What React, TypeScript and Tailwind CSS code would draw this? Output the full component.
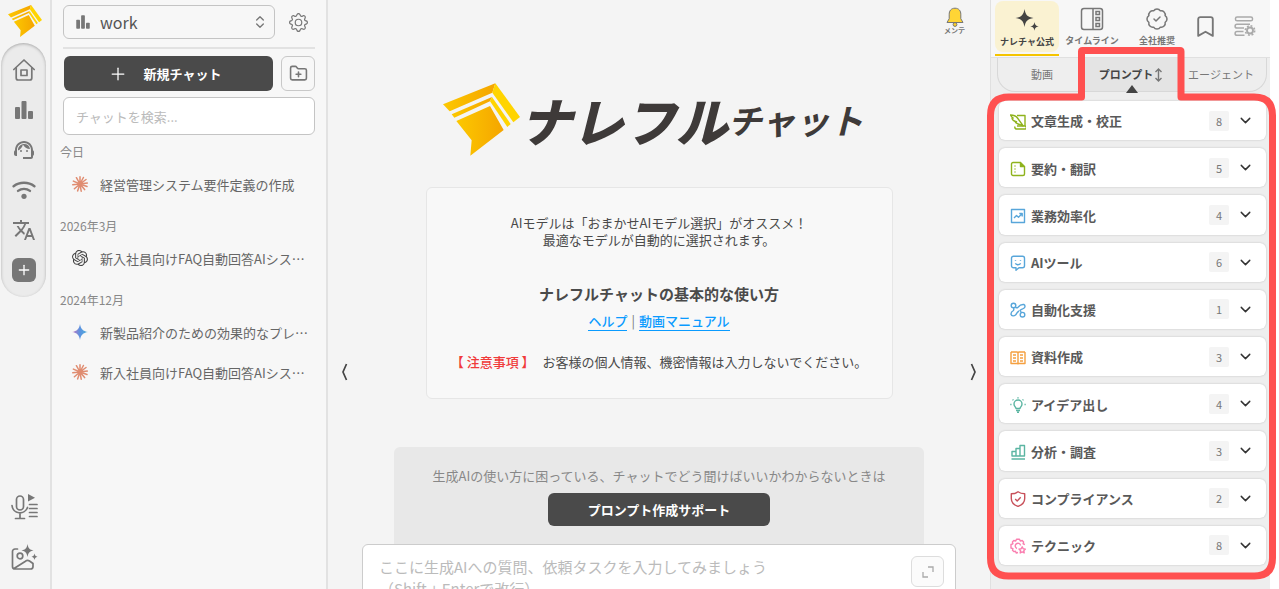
import React, { useState } from 'react';
import { BadgeCheck, Bookmark, ChevronDown, ChevronsUpDown, FolderPlus, Plus } from 'lucide-react';
import { BsGear } from 'react-icons/bs';
import { MdSupportAgent, MdTranslate } from 'react-icons/md';
import { SiOpenai } from 'react-icons/si';

const LogoMark = ({ id, className }: { id: string; className: string }) => (
  <svg viewBox="40 44 231 217" className={className} aria-hidden="true">
    <defs>
      <linearGradient id={id} x1="0" y1="0" x2="1" y2="0">
        <stop offset="0" stopColor="#fcc800" />
        <stop offset="1" stopColor="#f5a500" />
      </linearGradient>
    </defs>
    <path d="M40 107 197 44 188 72 60 128Z" fill={`url(#${id})`} />
    <path d="M197 44 271 145 251 161 188 72Z" fill="#ffd400" />
    <path d="M66 137 187 85 181 98 74 147Z" fill={`url(#${id})`} />
    <path d="M187 85 243 166 233 175 181 98Z" fill="#ffd400" />
    <path d="M80 157 181 112 222 184 122 261 126 215Z" fill={`url(#${id})`} />
  </svg>
);

const Bars = ({ className }: { className: string }) => (
  <svg viewBox="0 0 24 24" className={className} fill="currentColor" aria-hidden="true">
    <rect x="3" y="9" width="5" height="12" rx="1" />
    <rect x="9.5" y="3" width="5" height="18" rx="1" />
    <rect x="16" y="13" width="5" height="8" rx="1" />
  </svg>
);

const HomeIcon = () => (
  <svg viewBox="0 0 24 24" className="w-6 h-6" fill="none" stroke="currentColor" strokeWidth="1.7" strokeLinecap="round" strokeLinejoin="round" aria-hidden="true">
    <path d="M1.8 11.5 12 2l10.2 9.5" />
    <path d="M4.2 9.8V20a2 2 0 0 0 2 2h11.6a2 2 0 0 0 2-2V9.8" />
    <rect x="9" y="12" width="6" height="5.5" />
  </svg>
);

const WifiIcon = () => (
  <svg viewBox="0 0 24 24" className="w-6 h-6" fill="none" stroke="currentColor" strokeWidth="2.4" strokeLinecap="round" aria-hidden="true">
    <path d="M1.6 8.2c6-4.6 14.8-4.6 20.8 0" />
    <path d="M6 12.9c3.5-2.6 8.5-2.6 12 0" />
    <circle cx="12" cy="18.3" r="2.6" fill="currentColor" stroke="none" />
  </svg>
);

const MicIcon = () => (
  <svg viewBox="0 0 27 26" className="w-[27px] h-[26px]" fill="none" stroke="currentColor" strokeWidth="1.7" strokeLinecap="round" aria-hidden="true">
    <rect x="5.5" y="2" width="7" height="14" rx="3.5" />
    <path d="M1 11.5a8 8 0 0 0 15.5 2M9 20v4M4.500 24.500h9" />
    <path d="M17 0v7.500L24 3.800Z" fill="currentColor" stroke="none" />
    <path d="M18.500 10.500h7.500M18.500 14.500h7.500M18.500 18.500h7.500M18.500 22.500h7.500" />
  </svg>
);

const ImageIcon = () => (
  <svg viewBox="0 0 27 27" className="w-[27px] h-[27px]" fill="none" stroke="currentColor" strokeWidth="1.7" strokeLinecap="round" strokeLinejoin="round" aria-hidden="true">
    <path d="M6.500 5H4a2.500 2.500 0 0 0-2.500 2.500v15A2.500 2.500 0 0 0 4 25h15.500a2.500 2.500 0 0 0 2.500-2.500v-3L18.500 17c-1.300-.8-2.700-.8-4 .2L3 24.500" />
    <circle cx="9" cy="12" r="2.8" />
    <path d="M16.500 0c.8 4.500 2 5.500 6 6.500-4 .9-5.200 2-6 6.500-.8-4.500-2-5.600-6-6.500 4-1 5.200-2 6-6.500ZM23.500 9.500c.5 2.200 1 2.600 3 3.200-2 .6-2.500 1.200-3 3.200-.5-2-1-2.600-3-3.200 2-.6 2.500-1 3-3.200Z" fill="currentColor" stroke="none" />
  </svg>
);

const Burst = () => (
  <svg viewBox="-8 -8 16 16" className="w-4 h-4" stroke="#e08c70" strokeWidth="1.5" strokeLinecap="round" aria-hidden="true">
    <path d="M0 0 0-7.200M0 0 3.400-6.500M0 0 6-4.500M0 0 7.300-.9M0 0 7 2.500M0 0 4.600 5.600M0 0 1.200 7.200M0 0-2.400 6.900M0 0-5.600 4.700M0 0-7.300.8M0 0-6.600-2.900M0 0-3.600-6.300" />
  </svg>
);

const GeminiStar = () => (
  <svg viewBox="0 0 16 16" className="w-4 h-4" aria-hidden="true">
    <defs>
      <linearGradient id="gemini">
        <stop offset="0.1" stopColor="#b07cc6" />
        <stop offset="0.5" stopColor="#5a93e0" />
        <stop offset="1" stopColor="#4fb0d8" />
      </linearGradient>
    </defs>
    <path d="M8 0c.8 5 3 7.200 8 8-5 .8-7.200 3-8 8-.8-5-3-7.200-8-8 5-.8 7.200-3 8-8Z" fill="url(#gemini)" />
  </svg>
);

const Sparkles = () => (
  <svg viewBox="0 0 24 24" className="w-6 h-6" fill="currentColor" aria-hidden="true">
    <path d="M9.500 1c1 6 3 8 9 9-6 1-8 3-9 9-1-6-3-8-9-9 6-1 8-3 9-9ZM19.500 14c.5 3 1.300 3.800 4.200 4.400-2.900.6-3.700 1.400-4.200 4.400-.5-3-1.300-3.800-4.200-4.400 2.900-.6 3.700-1.400 4.200-4.400Z" />
  </svg>
);

const TimelineIcon = () => (
  <svg viewBox="0 0 24 24" className="w-6 h-6" fill="none" stroke="currentColor" strokeWidth="1.5" aria-hidden="true">
    <rect x="1.5" y="1.5" width="21" height="21" rx="2.5" />
    <path d="M13 1.500v21" />
    <rect x="16" y="4.5" width="3.5" height="3" />
    <rect x="16" y="10.5" width="3.5" height="3" />
    <rect x="16" y="16.5" width="3.5" height="3" />
  </svg>
);

const ListGear = () => (
  <svg viewBox="0 0 22 22" className="w-[22px] h-[22px]" fill="none" stroke="currentColor" strokeWidth="1.5" aria-hidden="true">
    <rect x="1.5" y="2" width="17" height="3.8" rx="1.6" />
    <path d="M11 9.300H3a1.900 1.900 0 0 0 0 3.800h7M9.500 16.500H3a1.900 1.900 0 0 0 0 3.800h7.500M11 9.300h5" />
    <circle cx="16" cy="15.5" r="3" strokeWidth="1.9" />
    <circle cx="16" cy="15.5" r="4.7" strokeWidth="1.6" strokeDasharray="1.9 1.79" />
  </svg>
);

const BellIcon = () => (
  <svg viewBox="0 0 20 20" className="w-5 h-5" aria-hidden="true">
    <circle cx="10" cy="17.5" r="1.9" fill="#ffcf24" stroke="#777" />
    <path d="M10 1.200c-4 0-5.800 2.800-5.800 6v4.500L2 15.500h16l-2.200-3.800V7.200c0-3.200-1.800-6-5.800-6Z" fill="#ffd535" stroke="#777" strokeLinejoin="round" />
  </svg>
);

const categories = [
  {
    label: '文章生成・校正',
    count: 8,
    color: 'text-[#8fb31d]',
    icon: (
      <>
        <path d="M7 1.500h8v10.300M5 12.500a2 2 0 0 0 1 2.500h8.500a1.500 1.500 0 0 0 .5-3H7" />
        <path d="M.5 1c3.200 0 5.500 1 7 3l5.700 7.800C9.500 10.500 7 10 5.500 8.500l1-.8C4 7.500 2 5.500 2 4.300l1.200-.3C2 3.300 1 2.200.5 1Z" />
      </>
    ),
  },
  {
    label: '要約・翻訳',
    count: 5,
    color: 'text-[#8fb31d]',
    icon: (
      <>
        <path d="M14.500 5.500V13a1.500 1.500 0 0 1-1.500 1.500H3A1.500 1.500 0 0 1 1.500 13V3A1.500 1.500 0 0 1 3 1.500h7.500" />
        <path d="M10.500 1.500v4h4Z" fill="currentColor" />
        <path d="M4.500 5h1M4.500 8h1M4.500 11h1" />
      </>
    ),
  },
  {
    label: '業務効率化',
    count: 4,
    color: 'text-[#58a6da]',
    icon: <path d="M1.500 1.500h13v13h-13ZM4 10l2.500-2.500 2 1.700L12 5.800M9.300 5.500h2.900v2.900" />,
  },
  {
    label: 'AIツール',
    count: 6,
    color: 'text-[#58a6da]',
    icon: (
      <>
        <path d="M3.500 1.200h9a2 2 0 0 1 2 2v7.600a2 2 0 0 1-2 2H9l-3 2.400v-2.400H3.500a2 2 0 0 1-2-2V3.200a2 2 0 0 1 2-2Z" />
        <path d="M5.500 5v.8M10.500 5v.8M5.300 8.300c1.400 1.900 4 1.900 5.400 0" />
      </>
    ),
  },
  {
    label: '自動化支援',
    count: 1,
    color: 'text-[#58a6da]',
    icon: (
      <>
        <circle cx="3.5" cy="3.5" r="2.3" />
        <circle cx="12.5" cy="12.7" r="2.3" />
        <path d="M5.500 5.200c1 1 1.500 1 2.500 0 1.500-1.800 3.500-3 5.800-2.700 1.700.8 1.600 3-.3 4-1.500.8-2.700 1-3.500 2 .7.500 1 1.500 1 2M3.500 6C4 7 4 7.500 3.500 8.500c-1.500.8-2.700 1.800-2.500 3.800.6 2 3 2 4.500.7 1.500-1.500 1.700-3.200 3.500-4" />
      </>
    ),
  },
  {
    label: '資料作成',
    count: 3,
    color: 'text-[#f5a040]',
    icon: <path d="M1 2h6a1 1 0 0 1 1 1v11.500M15 2H9a1 1 0 0 0-1 1v11.500M1 2v11.500h14V2M3 5h3M3 8h3M3 11h3M10 5h3M10 8h3M10 11h3" />,
  },
  {
    label: 'アイデア出し',
    count: 4,
    color: 'text-[#5bb5a2]',
    icon: (
      <>
        <path d="M6 11.500c0-1.500-2-2-2-4.500a4 4 0 0 1 8 0c0 2.500-2 3-2 4.500ZM6 13.500h4M7 15.300h2" />
        <path d="M8 .3v1.200M2.600 2.400l.8.800M13.400 2.400l-.8.8M.3 7.500h1.200M14.500 7.500h1.200" />
      </>
    ),
  },
  {
    label: '分析・調査',
    count: 3,
    color: 'text-[#5bb5a2]',
    icon: <path d="M2 7.500h4V12H2ZM6 4.500h4V12H6ZM10 1.500h4.500V12H10ZM1.500 15h13.500" />,
  },
  {
    label: 'コンプライアンス',
    count: 2,
    color: 'text-[#c8505a]',
    icon: <path d="M8 .8c2 1.500 4.200 2 6.700 2v4.700c0 3.800-2.700 6.500-6.700 7.900-4-1.400-6.700-4.100-6.700-7.900V2.800c2.500 0 4.700-.5 6.700-2ZM5.200 8l2 1.900 3.500-3.600" />,
  },
  {
    label: 'テクニック',
    count: 8,
    color: 'text-[#fa7fb0]',
    icon: (
      <>
        <path d="M8 14.500l-1.800.5-.7-1.700-1.700.3-1.300-1.300.4-1.700L1 10V6.500l1.900-.7-.5-1.900 1.400-1.400 1.900.5.800-1.800h3l.8 1.800 1.900-.5 1.400 1.400-.5 1.900 1.800.7" />
        <path d="M7 10.500A2.700 2.700 0 1 1 10.600 7.500" />
        <path d="m12.200 8.800 1 2 2.200.3-1.600 1.600.4 2.200-2-1-2 1 .4-2.200L9 11.100l2.200-.3Z" />
      </>
    ),
  },
];

const history = [
  { date: '今日', chats: [{ title: '経営管理システム要件定義の作成', icon: <Burst /> }] },
  {
    date: '2026年3月',
    chats: [{ title: '新入社員向けFAQ自動回答AIシス…', icon: <SiOpenai className="w-4 h-4 text-[#444]" /> }],
  },
  {
    date: '2024年12月',
    chats: [
      { title: '新製品紹介のための効果的なプレ…', icon: <GeminiStar /> },
      { title: '新入社員向けFAQ自動回答AIシス…', icon: <Burst /> },
    ],
  },
];

const railItems = [
  { label: 'ホーム', icon: <HomeIcon /> },
  { label: '統計', icon: <Bars className="w-6 h-6" /> },
  { label: 'サポート', icon: <MdSupportAgent className="w-6 h-6" /> },
  { label: '接続', icon: <WifiIcon /> },
  { label: '翻訳', icon: <MdTranslate className="w-6 h-6" /> },
];

const Rail = () => (
  <nav className="w-[52px] shrink-0 border-r-2 border-[#e2e2e2] bg-[#f4f4f4] text-[#777] flex flex-col">
    <LogoMark id="rail-logo" className="w-[34px] h-8 ml-2 mt-[5px]" />
    <div className="mt-1.5 ml-px w-[45px] h-[254px] shrink-0 rounded-full bg-[#ebebeb] shadow-[inset_0_1px_3px_#aaa] pt-[15px] flex flex-col items-center gap-4">
      {railItems.map((item) => (
        <button key={item.label} aria-label={item.label}>
          {item.icon}
        </button>
      ))}
      <button aria-label="追加" className="w-6 h-6 shrink-0 rounded-md bg-[#777] text-white flex items-center justify-center">
        <Plus className="w-4 h-4" />
      </button>
    </div>
    <div className="mt-auto mb-[18px] pl-[11px] flex flex-col gap-6">
      <button aria-label="音声文字起こし">
        <MicIcon />
      </button>
      <button aria-label="画像生成">
        <ImageIcon />
      </button>
    </div>
  </nav>
);

const Sidebar = () => (
  <aside className="w-[276px] shrink-0 border-r-2 border-[#e2e2e2] bg-[#f7f7f7] pt-[5px] text-[#777]">
    <div className="pl-[11px] pr-[11px]">
      <div className="flex items-center pb-2 border-b-2 border-[#e2e2e2]">
        <label className="w-[212px] h-[34px] flex items-center px-2.5 border border-[#c4c4c4] rounded-md">
          <Bars className="w-[18px] h-[18px] shrink-0" />
          <select aria-label="ワークスペース" className="flex-1 pl-2 appearance-none bg-transparent text-base leading-6 text-[#555] outline-none">
            <option>work</option>
          </select>
          <ChevronsUpDown className="w-4 h-4 ml-1 -mr-1 shrink-0 pointer-events-none" />
        </label>
        <button aria-label="設定" className="ml-3.5">
          <BsGear className="w-[19px] h-[19px]" />
        </button>
      </div>
      <div className="mt-[7px] pl-px flex gap-2">
        <button className="flex-1 h-[35px] pr-2 rounded-md bg-[#4a4a4a] text-white text-[13px] font-bold flex items-center justify-center gap-4">
          <Plus className="w-5 h-5" strokeWidth={1.5} />
          新規チャット
        </button>
        <button aria-label="フォルダを追加" className="w-[34px] h-[35px] rounded-md border border-[#c8c8c8] flex items-center justify-center">
          <FolderPlus className="w-[19px] h-[19px]" />
        </button>
      </div>
      <input
        aria-label="チャットを検索"
        placeholder="チャットを検索..."
        className="mt-1.5 w-full h-[38px] px-3 rounded-md border border-[#c4c4c4] bg-white text-[13px] placeholder:text-[#bbb]"
      />
    </div>
    <div className="pl-2 pr-2.5 pt-[7px]">
      {history.map((group) => (
        <section key={group.date} className="mb-3">
          <h2 className="text-xs leading-5 text-[#888]">{group.date}</h2>
          <div className="pt-[2px]">
            {group.chats.map((chat, i) => (
              <a key={i} href="#" className="h-10 pl-3 flex items-center gap-3 text-[13px] text-[#666]">
                <span className="shrink-0">{chat.icon}</span>
                <span className="pt-px whitespace-nowrap">{chat.title}</span>
              </a>
            ))}
          </div>
        </section>
      ))}
    </div>
  </aside>
);

const ChatArea = () => (
  <main className="relative flex-1 min-w-0 bg-[#f4f4f4] text-[#4a4a4a] overflow-hidden flex flex-col items-center">
    <button className="absolute top-[7px] right-[25px] flex flex-col items-center text-[7px] font-bold leading-[6px] text-[#777]">
      <BellIcon />
      メンテ
    </button>
    <button aria-label="左を閉じる" className="absolute left-3 top-[363px]">
      <svg viewBox="0 0 8 18" className="w-2 h-[18px]" fill="none" stroke="#444" strokeWidth="1.7">
        <path d="M6.500 1 3 9 6.500 17" />
      </svg>
    </button>
    <button aria-label="右を閉じる" className="absolute right-3 top-[363px]">
      <svg viewBox="0 0 8 18" className="w-2 h-[18px]" fill="none" stroke="#444" strokeWidth="1.7">
        <path d="M1.500 1 5 9 1.500 17" />
      </svg>
    </button>

    <h1 className="mt-[83px] mr-3 flex items-center shrink-0 text-[#3e3a39] italic whitespace-nowrap">
      <LogoMark id="main-logo" className="w-[77px] h-[73px] shrink-0" />
      <span className="text-[52px] leading-[70px] font-black">ナレフル</span>
      <span className="text-[34px] leading-[73px] font-bold">チャット</span>
    </h1>

    <section className="mt-[31px] w-[467px] max-w-full shrink-0 rounded-md border border-[#e6e6e6] bg-[#f8f8f8] pt-[26px] pb-[26px] text-center text-[13px]">
      <p className="leading-[17px]">
        AIモデルは「おまかせAIモデル選択」がオススメ！
        <br />
        最適なモデルが自動的に選択されます。
      </p>
      <h2 className="mt-[34px] text-[15px] leading-6 font-bold">ナレフルチャットの基本的な使い方</h2>
      <p className="mt-1.5 leading-[18px] flex justify-center gap-1 font-medium text-[#0a9bff]">
        <a href="#" className="border-b border-[#0a9bff]">ヘルプ</a>
        <span className="font-normal text-[#777]">|</span>
        <a href="#" className="border-b border-[#0a9bff]">動画マニュアル</a>
      </p>
      <p className="mt-[21px] leading-5">
        <strong className="font-medium text-[#f03a3a] mr-2">【 注意事項 】</strong>
        お客様の個人情報、機密情報は入力しないでください。
      </p>
    </section>

    <section className="mt-12 w-[530px] max-w-full h-[97px] shrink-0 rounded-t-md bg-[#e8e8e8] pt-5 flex flex-col items-center">
      <p className="text-[13px] leading-[18px] text-[#888]">生成AIの使い方に困っている、チャットでどう聞けばいいかわからないときは</p>
      <button className="mt-2 w-[222px] h-[33px] rounded-md bg-[#4a4a4a] text-white text-[13px] font-bold">プロンプト作成サポート</button>
    </section>

    <form className="w-[594px] max-w-full shrink-0 h-[100px] rounded-md border border-[#ccc] bg-white pt-[11px] pl-4 pr-[11px] flex items-start">
      <textarea
        aria-label="メッセージ"
        placeholder={'ここに生成AIへの質問、依頼タスクを入力してみましょう\n（Shift + Enterで改行）'}
        className="flex-1 h-20 resize-none outline-none text-[15px] leading-[22px] placeholder:text-[#bbb]"
      />
      <button type="button" aria-label="拡大" className="w-[33px] h-[31px] rounded-md border border-[#ddd] bg-[#fbfbfb] flex items-center justify-center">
        <svg viewBox="0 0 12 12" className="w-3 h-3" fill="none" stroke="#aaa" strokeWidth="1.3">
          <path d="M6 1h5v5M1 6v5h5" />
        </svg>
      </button>
    </form>
  </main>
);

const PromptPanel = () => {
  const [open, setOpen] = useState('');

  return (
    <aside className="relative w-[280px] shrink-0 border-l border-[#e0e0e0] bg-[#eee] text-[#777] flex flex-col">
      <div className="h-[58px] shrink-0 pl-1 bg-[#f7f7f7] border-b border-[#e0e0e0] flex text-[9px] font-bold leading-3">
        <button className="w-16 mt-px h-[55px] border-b-2 border-[#f5c400] text-[#444]">
          <span className="h-[51px] mb-0.5 rounded-lg bg-[#faf2d2] pt-[7px] flex flex-col items-center gap-1">
            <Sparkles />
            ナレチャ公式
          </span>
        </button>
        <button className="w-[66px] pt-[7px] flex flex-col items-center gap-1">
          <TimelineIcon />
          <span>タイムライン</span>
        </button>
        <button className="w-16 pt-[7px] flex flex-col items-center gap-1">
          <BadgeCheck className="w-6 h-6" strokeWidth={1.5} />
          <span>全社推奨</span>
        </button>
        <button aria-label="ブックマーク" className="w-8 h-[52px] flex items-center justify-center">
          <Bookmark className="w-[25px] h-[25px]" strokeWidth={1.8} />
        </button>
        <button aria-label="表示設定" className="w-12 h-[52px] flex items-center justify-center text-[#aaa]">
          <ListGear />
        </button>
      </div>

      <div className="ml-1.5 mr-[3px] h-[34px] shrink-0 rounded-b-[18px] border border-t-0 border-[#d8d8d8] bg-[#eee] flex text-[11px]">
        <button className="w-[84px] pl-1">動画</button>
        <button className="relative w-[98px] bg-[#e4e4e4] font-bold text-[#444] flex items-center justify-center gap-px">
          プロンプト
          <svg viewBox="0 0 8 14" className="w-[9px] h-3.5" fill="none" stroke="#777" strokeWidth="1.4" aria-hidden="true">
            <path d="M4 1v12M1 4l3-3 3 3M1 10l3 3 3-3" />
          </svg>
          <svg viewBox="0 0 12 8" className="absolute -bottom-0.5 left-11 w-3 h-2" fill="#444" aria-hidden="true">
            <path d="M6 0 12 8H0Z" />
          </svg>
        </button>
        <button className="flex-1 pr-1 whitespace-nowrap">エージェント</button>
      </div>

      <ul className="flex-1 mt-[9px] mb-6 ml-2 mr-1 grid auto-rows-fr gap-2">
        {categories.map((category) => (
          <li key={category.label}>
            <button
              onClick={() => setOpen(open === category.label ? '' : category.label)}
              aria-expanded={open === category.label}
              className="w-full h-full pl-[11px] pr-3 rounded-md bg-white shadow-[0_0_2px_#bbb] flex items-center text-left"
            >
              <svg viewBox="0 0 16 16" className={`w-4 h-4 shrink-0 mt-0.5 ${category.color}`} fill="none" stroke="currentColor" strokeWidth="1.4" strokeLinejoin="round" aria-hidden="true">
                {category.icon}
              </svg>
              <span className="ml-[5px] pt-px flex-1 text-[13px] font-bold text-[#595959]">{category.label}</span>
              <span className="w-5 h-5 rounded-xs bg-[#f4f4f4] text-[11px] leading-5 text-center">{category.count}</span>
              <ChevronDown className="ml-2 w-[17px] h-[17px] text-[#333]" />
            </button>
          </li>
        ))}
      </ul>

      {/* Highlight frame around the prompt tab and its list */}
      <svg viewBox="0 0 290 534" className="absolute -left-[5px] top-[46px] w-[290px] h-[534px] pointer-events-none z-10" fill="none" stroke="#ff5050" strokeWidth="7" strokeLinejoin="round" aria-hidden="true">
        <path d="M95.500 51V5.500q0-1 1-1h97.500q1 0 1 1V51H268q18.500 0 18.500 18.500V512q0 18-18 18H22.500q-18 0-18-18V69.500Q4.500 51 23 51Z" />
      </svg>
    </aside>
  );
};

const App = () => {
  return (
    <div className="h-screen flex overflow-hidden bg-white pr-[9px] font-['Noto_Sans_CJK_JP','Noto_Sans',sans-serif]">
      <Rail />
      <Sidebar />
      <ChatArea />
      <PromptPanel />
    </div>
  );
};

export default App;
